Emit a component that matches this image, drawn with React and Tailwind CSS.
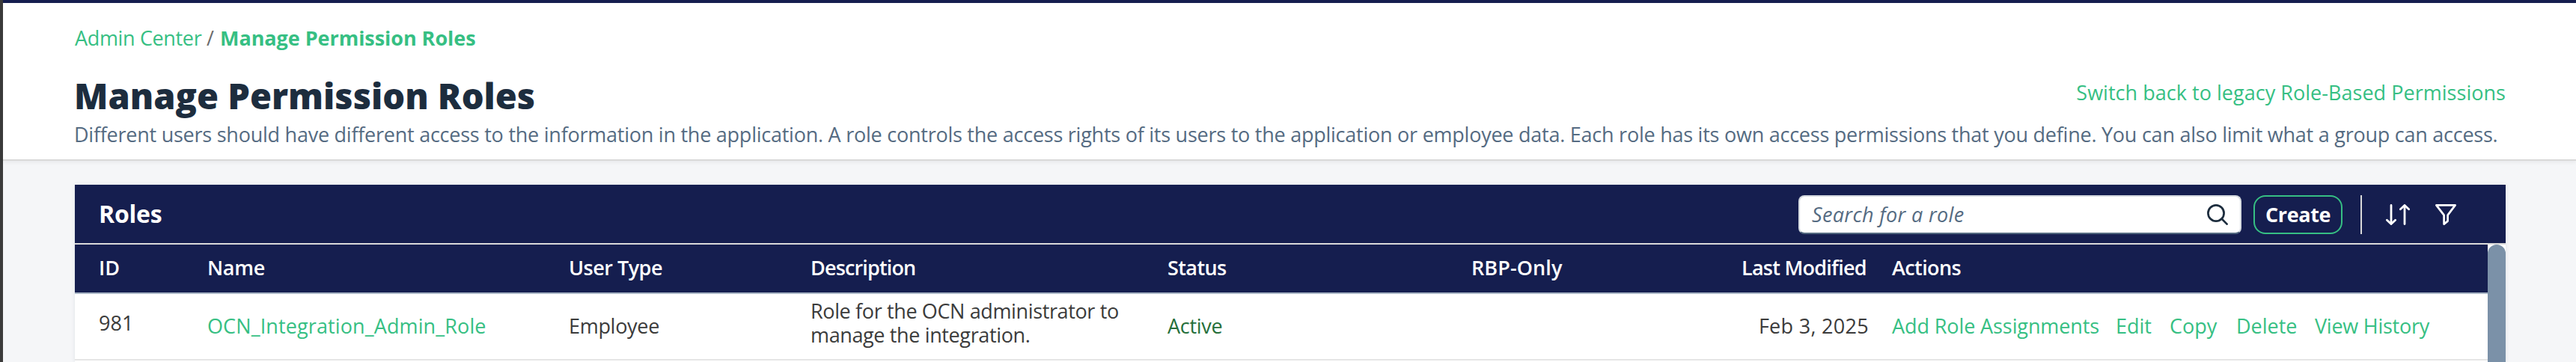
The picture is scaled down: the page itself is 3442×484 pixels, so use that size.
import React from "react";

const columns = "grid grid-cols-[145px_483px_323px_477px_406px_362px_170px_1fr] pl-[32px]";

function SearchIcon() {
  return (
    <svg width="28" height="28" viewBox="0 0 28 28" fill="none" stroke="#1d2d3e" strokeWidth="2.7" strokeLinecap="round">
      <circle cx="12" cy="12" r="10.6" />
      <path d="M19.8 19.8L26.6 26.6" />
    </svg>
  );
}

function SortIcon() {
  return (
    <svg width="32" height="28" viewBox="0 0 32 28" fill="none" stroke="#fff" strokeLinecap="round" strokeLinejoin="round">
      <path d="M7 1.4V25.5M25 26.6V2.5" strokeWidth="2.8" />
      <path d="M1.4 21.2L7 26.6L12.6 21.2M19.4 6.8L25 1.4L30.6 6.8" strokeWidth="2.8" />
    </svg>
  );
}

function FilterIcon() {
  return (
    <svg width="28" height="28" viewBox="0 0 28 28" fill="none" stroke="#fff" strokeWidth="2.7" strokeLinejoin="round">
      <path d="M1.4 1.4H26.6L16.6 14.6V22.6L11.6 26.6V14.6Z" />
    </svg>
  );
}

export default function App() {
  return (
    <div className="flex h-[484px] w-[3442px] overflow-hidden bg-[#f5f6f8] font-['Open_Sans',sans-serif] text-[27px] leading-8 text-[#3b3b3b]">
      <div className="w-1 shrink-0 bg-[#3b3b3b]" />
      <div className="flex min-w-0 grow flex-col">
        <header className="h-[215px] shrink-0 border-t-4 border-b-2 border-t-[#151e4f] border-b-[#d9d9d9] bg-white pt-[31px] pr-[94px] pl-[95px] shadow-[0_2px_5px_rgba(0,0,0,0.06)]">
          <nav className="flex h-8 whitespace-pre text-[#36bf83]">
            <span className="w-[184px] pl-px tracking-[-0.35px]">
              Admin Center <span className="text-[#6b6b6b]">/</span>
            </span>
            <span className="pl-[11px] font-bold tracking-[-0.05px]">Manage Permission Roles</span>
          </nav>
          <div className="mt-[33px] flex justify-between">
            <h1 className="text-[47px] leading-[56px] font-extrabold text-[#1d2d3e]">Manage Permission Roles</h1>
            <a className="mt-2 tracking-[0.03px] text-[#36bf83]">Switch back to legacy Role-Based Permissions</a>
          </div>
          <p className="mt-2 tracking-[-0.245px] whitespace-nowrap text-[#556b82]">
            Different users should have different access to the information in the application. A role controls the access rights of its users to the application or employee data. Each role has its own access permissions that you define. You can also limit what a group can access.
          </p>
        </header>

        <main className="mt-8 mr-[94px] ml-24 flex min-h-0 grow flex-col bg-white shadow-[0_0_5px_rgba(34,53,72,0.1)]">
          <div className="flex h-20 shrink-0 items-start border-b-2 border-[#d9d9d9] bg-[#151e4f] pt-[14px] pr-[66px] pl-[32px]">
            <h2 className="mt-1 text-[32px] leading-[42px] font-bold tracking-[-0.2px] text-white">Roles</h2>
            <div className="ml-auto flex h-[52px] w-[592px] items-center justify-between rounded-lg border-2 border-[#d5dae0] border-b-[#556b82] bg-white pr-4 pl-4">
              <span className="tracking-[0.35px] text-[#556b82] italic">Search for a role</span>
              <SearchIcon />
            </div>
            <button className="ml-4 flex h-[52px] w-[119px] items-center justify-center rounded-2xl border-2 border-[#36bf83] font-bold tracking-[-0.4px] text-white">
              Create
            </button>
            <div className="ml-[24px] h-[52px] w-[2px] bg-[#d9d9d9]" />
            <div className="mt-3 ml-8">
              <SortIcon />
            </div>
            <div className="mt-3 ml-[34px]">
              <FilterIcon />
            </div>
          </div>

          <div className="flex min-h-0 grow">
            <div className="min-w-0 grow">
              <div className={columns + " h-[66px] border-b-2 border-[#a8b5c5] bg-[#151e4f] pt-[15px] font-semibold text-white"}>
                <span>ID</span>
                <span className="tracking-[-0.3px]">Name</span>
                <span className="tracking-[-0.5px]">User Type</span>
                <span className="tracking-[-0.85px]">Description</span>
                <span className="tracking-[-0.6px]">Status</span>
                <span className="tracking-[0.1px]">RBP-Only</span>
                <span className="-ml-px tracking-[-0.75px] whitespace-nowrap">Last Modified</span>
                <span className="pl-[30px] tracking-[-0.6px]">Actions</span>
              </div>
              <div className={columns + " h-[89px] border-b-2 border-[#e5e5e5]"}>
                <span className="mt-[23px]">981</span>
                <a className="mt-[27px] tracking-[0.12px] text-[#36bf83]">OCN_Integration_Admin_Role</a>
                <span className="mt-[27px] tracking-[-0.3px]">Employee</span>
                <span className="mt-[7px] w-[430px] tracking-[-0.37px]">Role for the OCN administrator to manage the integration.</span>
                <span className="mt-[27px] tracking-[-0.3px] text-[#256f3a]">Active</span>
                <span />
                <span className="mt-[27px] -ml-4 pr-px text-right tracking-[0.3px] whitespace-nowrap">Feb 3, 2025</span>
                <div className="mt-[27px] flex pl-[30px] whitespace-nowrap text-[#36bf83]">
                  <a className="w-[299px] tracking-[-0.1px]">Add Role Assignments</a>
                  <a className="w-[72px]">Edit</a>
                  <a className="w-[89px]">Copy</a>
                  <a className="w-[105px]">Delete</a>
                  <a className="tracking-[-0.25px]">View History</a>
                </div>
              </div>
            </div>
            <div className="w-6 shrink-0 rounded-t-full bg-[#7b91a8]" />
          </div>
        </main>
      </div>
    </div>
  );
}
